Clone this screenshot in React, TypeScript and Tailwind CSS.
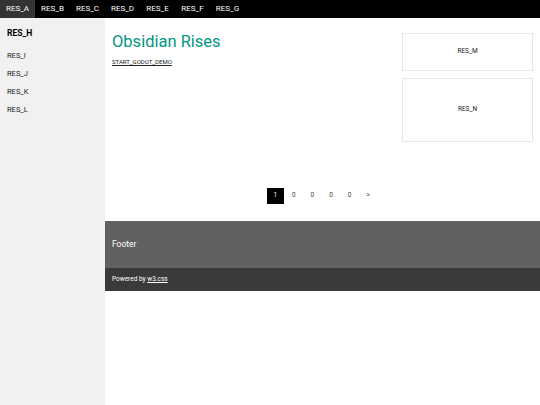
import React from 'react'

const topNav = ['RES_A', 'RES_B', 'RES_C', 'RES_D', 'RES_E', 'RES_F', 'RES_G']
const sideLinks = ['RES_I', 'RES_J', 'RES_K', 'RES_L']
const pages = ['1', '0', '0', '0', '0', '>']

export default function App() {
  return (
    <div className="min-h-[405px] w-[540px] bg-white text-black" style={{ fontFamily: 'Roboto, "Liberation Sans", sans-serif' }}>
      {/* top bar */}
      <div className="flex h-[18px] bg-black">
        {topNav.map((n, i) => (
          <div
            key={n}
            className={`flex w-[35px] items-center justify-center text-[8px] text-white ${i === 0 ? 'bg-[#333333]' : ''}`}
          >
            {n}
          </div>
        ))}
      </div>

      <div className="flex min-h-[387px]">
        {/* sidebar */}
        <div className="w-[105px] shrink-0 bg-[#f1f1f1] pt-[7px]">
          <div className="flex h-[16px] items-center px-[7px] text-[8.5px] font-bold">RES_H</div>
          <div className="mt-[6px]">
            {sideLinks.map((l) => (
              <div key={l} className="flex h-[18px] items-center px-[7px] text-[7.5px] text-[#222]">
                {l}
              </div>
            ))}
          </div>
        </div>

        {/* main */}
        <div className="flex flex-1 flex-col">
          <div className="flex h-[203px] flex-col justify-between pb-[17px]">
            <div className="flex">
              <div className="flex-1 px-[7px] pt-[12px]">
                <h1 className="text-[16.5px] leading-[24px] text-[#009688]">Obsidian Rises</h1>
                <a className="mt-[3px] block text-[6px] text-[#222] underline">START_GODOT_DEMO</a>
              </div>
              <div className="w-[145px] px-[7px] pt-[15px]">
                <div className="flex h-[38px] items-center justify-center border border-[#e6e6e6] text-[6.5px] text-[#222]">
                  RES_M
                </div>
                <div className="mt-[7px] flex h-[64px] items-center justify-center border border-[#e6e6e6] text-[6.5px] text-[#222]">
                  RES_N
                </div>
              </div>
            </div>
            <div className="flex justify-center">
              {pages.map((p, i) => (
                <div
                  key={i}
                  className={`mr-[1.6px] flex h-[16px] w-[17px] items-center justify-center text-[6.5px] ${
                    i === 0 ? 'bg-black text-white' : 'text-[#444]'
                  }`}
                >
                  {p}
                </div>
              ))}
            </div>
          </div>

          {/* footer */}
          <div className="flex h-[47px] items-center bg-[#616161] px-[7px] text-[8.5px] text-white">Footer</div>
          <div className="flex h-[23px] items-center bg-[#3a3a3a] px-[7px] text-[6.5px] text-white">
            Powered by&nbsp;<a className="underline">w3.css</a>
          </div>
        </div>
      </div>
    </div>
  )
}
